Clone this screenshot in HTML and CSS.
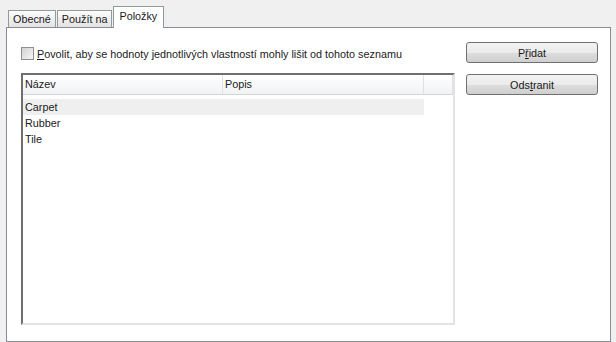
FILE: index.html
```html
<!DOCTYPE html>
<html lang="cs">
<head>
    <meta charset="UTF-8">
    <title>Položky</title>
    <link rel="stylesheet" href="styles.css">
</head>
<body>
    <div class="tabs">
        <div class="tab">Obecné</div>
        <div class="tab">Použít na</div>
        <div class="tab active">Položky</div>
    </div>
    <div class="panel">
        <div class="main">
            <label class="check">
                <span class="box"></span>
                <span><u>P</u>ovolit, aby se hodnoty jednotlivých vlastností mohly lišit od tohoto seznamu</span>
            </label>
            <div class="list">
                <div class="list-head">
                    <div class="col name">Název</div>
                    <div class="col desc">Popis</div>
                    <div class="col rest"></div>
                </div>
                <div class="row selected"><div class="col name">Carpet</div><div class="col desc"></div></div>
                <div class="row"><div class="col name">Rubber</div><div class="col desc"></div></div>
                <div class="row"><div class="col name">Tile</div><div class="col desc"></div></div>
            </div>
        </div>
        <div class="side">
            <button class="btn">P<u>ř</u>idat</button>
            <button class="btn">Ods<u>t</u>ranit</button>
        </div>
    </div>
</body>
</html>
```

FILE: styles.css
```css
body {
    margin: 0;
    width: 616px;
    height: 342px;
    background: #f0f0f0;
    color: #1a1a1a;
    font-family: Tahoma, "Liberation Sans", Arial, sans-serif;
    font-size: 10.8px;
    overflow: hidden;
}
u {
    text-decoration: underline;
    text-underline-offset: 1px;
}
.tabs {
    display: flex;
    align-items: flex-end;
    height: 27px;
    padding-left: 8px;
}
.tab {
    height: 16px;
    line-height: 16px;
    padding: 0 4px;
    margin-right: 1px;
    border: 1px solid #919b9c;
    border-bottom: none;
    background: linear-gradient(#fcfcfc, #e2e2e2);
}
.tab.active {
    position: relative;
    top: 1px;
    height: 21px;
    line-height: 18px;
    padding: 0 6px 0 5px;
    background: #fff;
    z-index: 1;
}
.panel {
    display: flex;
    margin: 0 5px 0 6px;
    height: 299px;
    padding: 14px 12px 0 14px;
    background: #fff;
    border: 1px solid #898c95;
}
.main {
    width: 434px;
    padding-top: 5px;
}
.check {
    display: flex;
    align-items: center;
    gap: 3px;
    height: 13px;
    margin-bottom: 13px;
}
.box {
    width: 11px;
    height: 11px;
    border: 1px solid #8f8f8f;
    background: linear-gradient(135deg, #d2d2d2, #f6f6f6);
}
.list {
    height: 248px;
    border: 2px solid;
    border-color: #6f6f6f #e3e3e3 #e3e3e3 #6f6f6f;
}
.list-head {
    display: flex;
    height: 19px;
    line-height: 18px;
    border-bottom: 1px solid #d5d5d5;
    background: linear-gradient(#fff, #f1f2f4);
    margin-bottom: 4px;
}
.list-head .col {
    border-right: 1px solid #dfe1e4;
}
.col {
    padding-left: 2px;
    box-sizing: border-box;
}
.name {
    width: 200px;
}
.desc {
    width: 201px;
}
.rest {
    flex: 1;
}
.row {
    display: flex;
    height: 16px;
    line-height: 16px;
}
.row.selected {
    background: #efefef;
    width: 401px;
}
.side {
    display: flex;
    flex-direction: column;
    gap: 11px;
    margin-left: 11px;
}
.btn {
    width: 132px;
    height: 21px;
    padding: 0;
    font: inherit;
    color: #1a1a1a;
    border: 1px solid #707070;
    border-radius: 3px;
    background: linear-gradient(#f2f2f2 0%, #ebebeb 50%, #dddddd 51%, #cfcfcf 100%);
}
```
